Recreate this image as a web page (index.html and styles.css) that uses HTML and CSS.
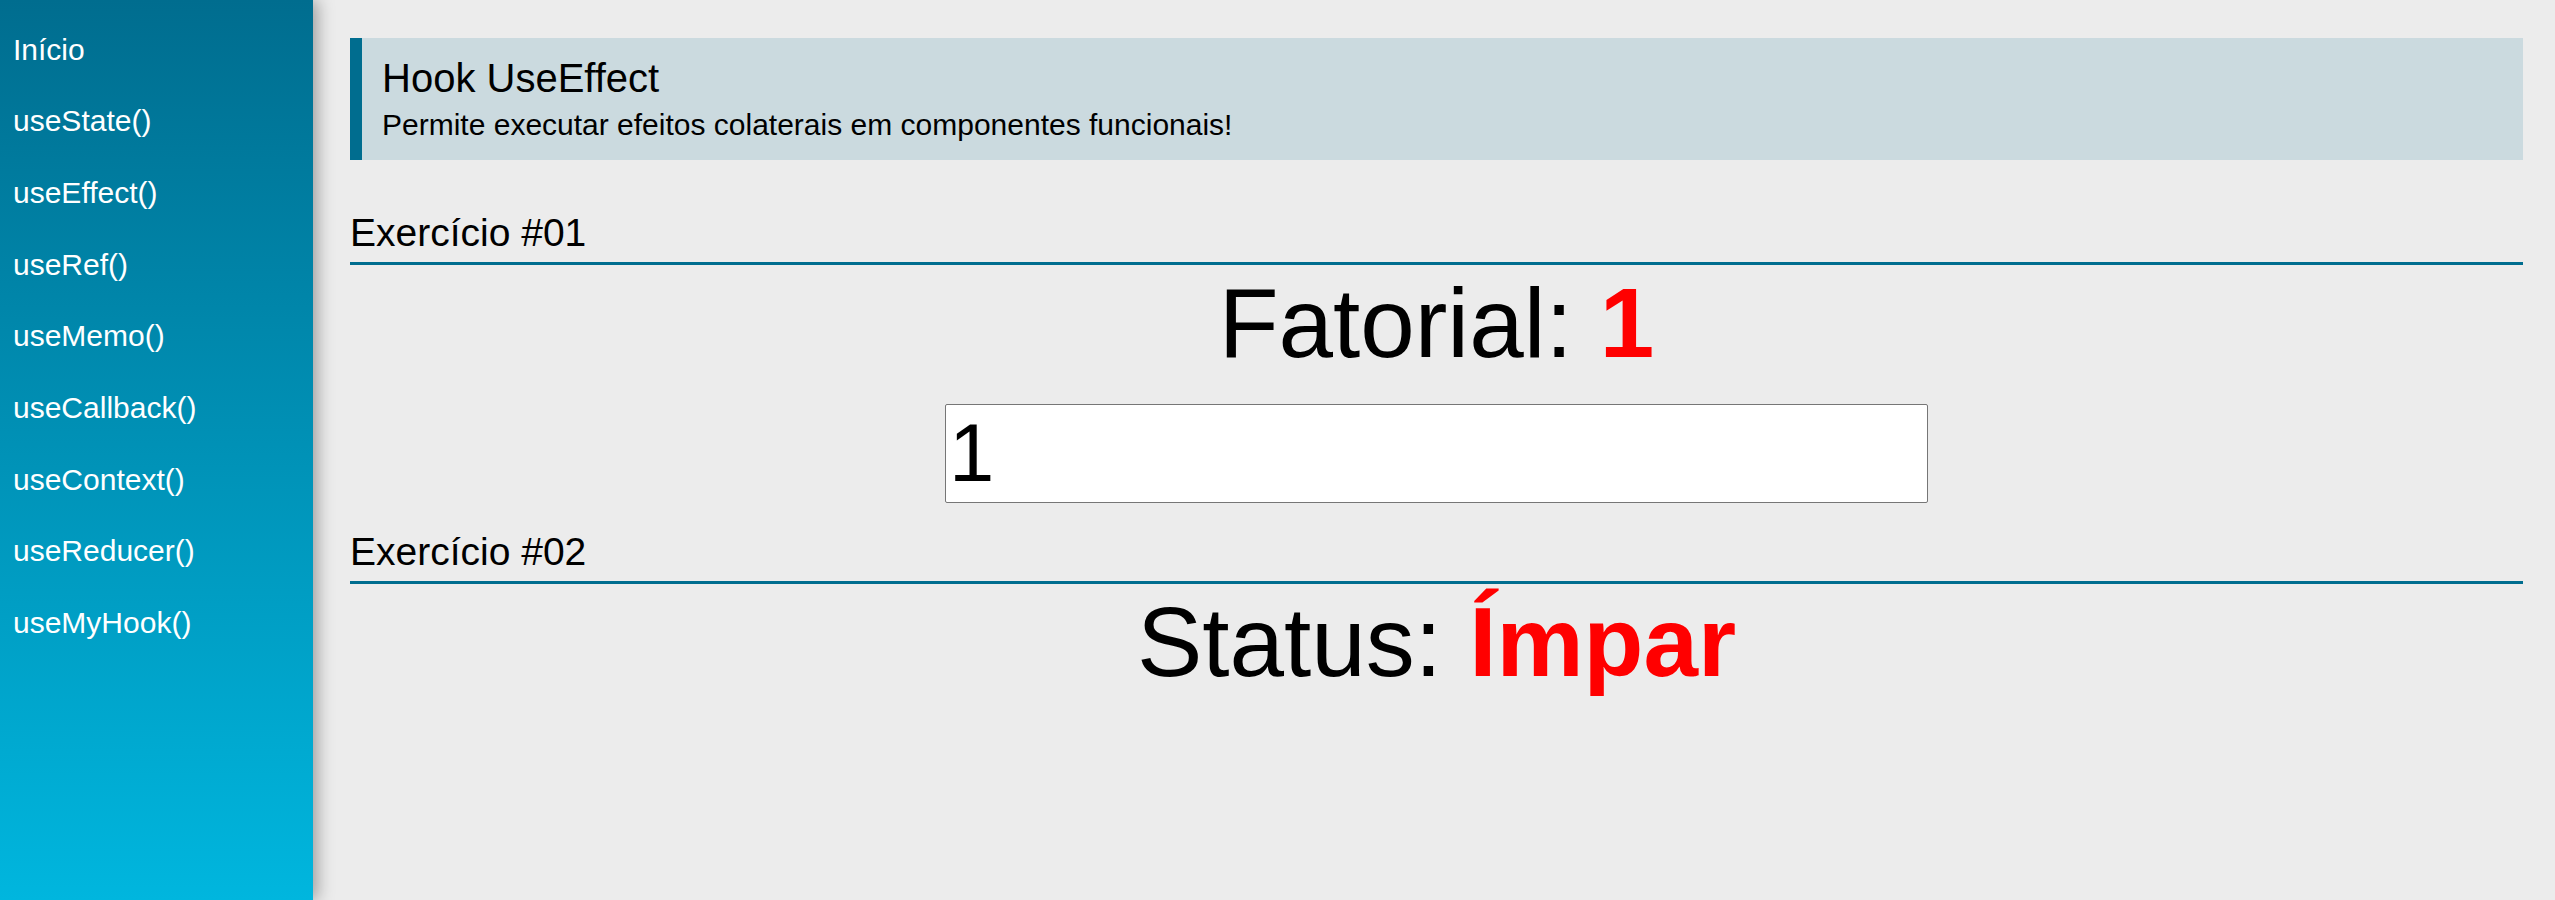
FILE: index.html
```html
<!DOCTYPE html>
<html lang="pt-BR">
<head>
<meta charset="utf-8">
<title>Hook UseEffect</title>
<link rel="stylesheet" href="styles.css">
</head>
<body>
<div class="app">
  <aside class="menu">
    <nav>
      <ul class="menu-list">
        <li><a href="#" class="menu-link">Início</a></li>
        <li><a href="#" class="menu-link">useState()</a></li>
        <li><a href="#" class="menu-link">useEffect()</a></li>
        <li><a href="#" class="menu-link">useRef()</a></li>
        <li><a href="#" class="menu-link">useMemo()</a></li>
        <li><a href="#" class="menu-link">useCallback()</a></li>
        <li><a href="#" class="menu-link">useContext()</a></li>
        <li><a href="#" class="menu-link">useReducer()</a></li>
        <li><a href="#" class="menu-link">useMyHook()</a></li>
      </ul>
    </nav>
  </aside>
  <main class="content">
    <div class="page-title">
      <h1 class="page-title-main">Hook UseEffect</h1>
      <h2 class="page-title-sub">Permite executar efeitos colaterais em componentes funcionais!</h2>
    </div>
    <h2 class="section-title first">Exercício #01</h2>
    <div class="center">
      <span class="text">Fatorial: </span><span class="text red">1</span>
    </div>
    <input type="number" class="input" value="1">
    <h2 class="section-title">Exercício #02</h2>
    <div class="center">
      <span class="text">Status: </span><span class="text red">Ímpar</span>
    </div>
  </main>
</div>
</body>
</html>
```

FILE: styles.css
```css
* {
  box-sizing: border-box;
}

html, body {
  margin: 0;
  padding: 0;
}

body {
  font-family: "Liberation Sans", Arial, sans-serif;
  background: #ececec;
  color: #000;
}

.app {
  display: flex;
  min-height: 900px;
}

.menu {
  width: 313px;
  flex-shrink: 0;
  height: 900px;
  background: linear-gradient(to bottom, #006d8f 0%, #00b6de 100%);
  box-shadow: 4px 0 16px rgba(0, 0, 0, 0.35);
  padding-top: 14px;
  position: relative;
  z-index: 1;
}

.menu-list {
  list-style: none;
  margin: 0;
  padding: 0;
}

.menu-link {
  display: block;
  color: #fff;
  text-decoration: none;
  font-size: 30px;
  line-height: 34.5px;
  padding: 18.6px 13px;
}

.content {
  flex: 1;
  display: flex;
  flex-direction: column;
  padding: 38px 32px 0 37px;
}

.page-title {
  background: #cbdadf;
  border-left: 12px solid #006d8f;
  padding: 16.8px 20px 18.4px 20px;
}

.page-title-main {
  margin: 0 0 6.8px 0;
  font-size: 40px;
  line-height: 46px;
  font-weight: normal;
}

.page-title-sub {
  margin: 0;
  font-size: 30px;
  line-height: 34px;
  font-weight: normal;
}

.section-title {
  margin: 26px 0 0 0;
  font-size: 39px;
  line-height: 45px;
  font-weight: normal;
  padding-bottom: 7px;
  border-bottom: 3px solid #006d8f;
}

.section-title.first {
  margin-top: 50px;
}

.center {
  margin-top: 2px;
  text-align: center;
  font-size: 98px;
  line-height: 112px;
}

.text {
  font-size: 98px;
}

.red {
  color: #ff0000;
  font-weight: bold;
}

.input {
  align-self: center;
  margin-top: 25px;
  width: 983px;
  height: 99px;
  font-family: "Liberation Sans", Arial, sans-serif;
  font-size: 81.5px;
  padding: 0 3px;
  border: 1.5px solid #767676;
  border-radius: 2px;
  background: #fff;
  color: #000;
}

.input::-webkit-inner-spin-button,
.input::-webkit-outer-spin-button {
  -webkit-appearance: none;
  margin: 0;
}
```
